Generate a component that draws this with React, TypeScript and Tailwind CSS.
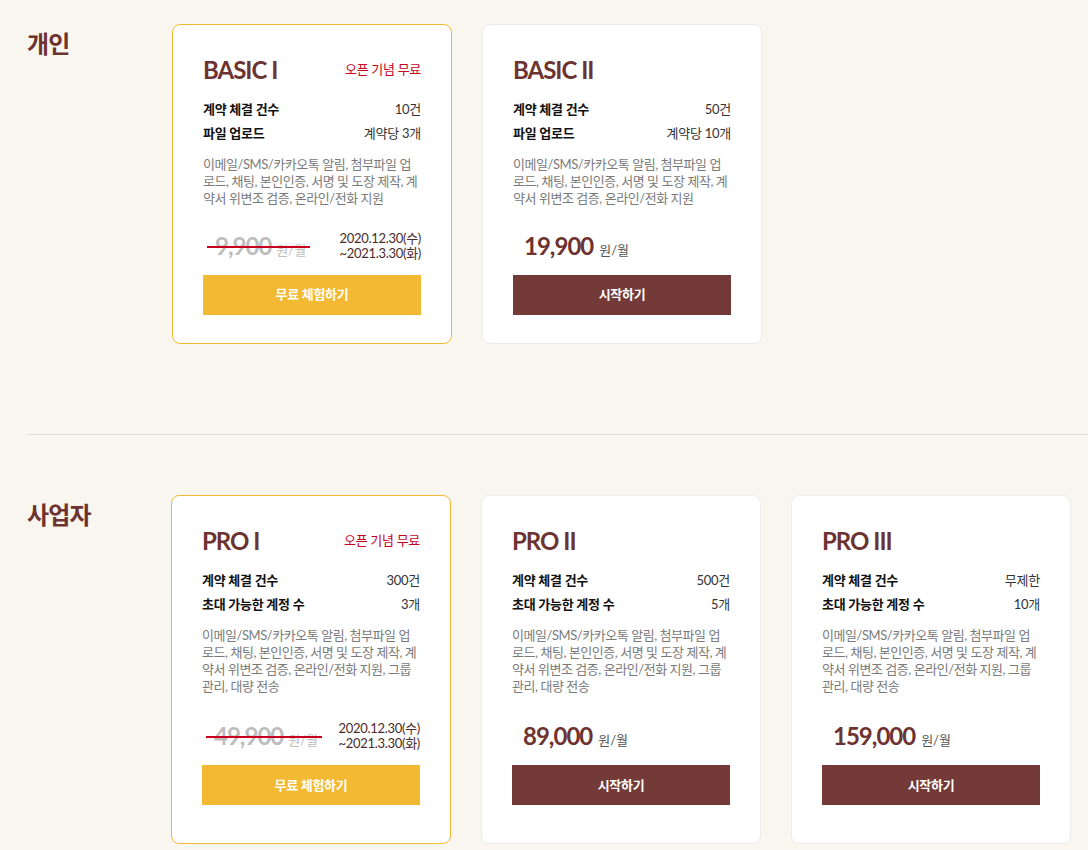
import clsx from "clsx";

type Plan = {
  name: string;
  rows: [string, string][];
  desc: string[];
  price: string;
  promo?: boolean;
};

const descPersonal = [
  "이메일/SMS/카카오톡 알림, 첨부파일 업",
  "로드, 채팅, 본인인증, 서명 및 도장 제작, 계",
  "약서 위변조 검증, 온라인/전화 지원",
];

const descBusiness = [
  "이메일/SMS/카카오톡 알림, 첨부파일 업",
  "로드, 채팅, 본인인증, 서명 및 도장 제작, 계",
  "약서 위변조 검증, 온라인/전화 지원, 그룹",
  "관리, 대량 전송",
];

const personal: Plan[] = [
  {
    name: "BASIC I",
    promo: true,
    rows: [
      ["계약 체결 건수", "10건"],
      ["파일 업로드", "계약당 3개"],
    ],
    desc: descPersonal,
    price: "9,900",
  },
  {
    name: "BASIC II",
    rows: [
      ["계약 체결 건수", "50건"],
      ["파일 업로드", "계약당 10개"],
    ],
    desc: descPersonal,
    price: "19,900",
  },
];

const business: Plan[] = [
  {
    name: "PRO I",
    promo: true,
    rows: [
      ["계약 체결 건수", "300건"],
      ["초대 가능한 계정 수", "3개"],
    ],
    desc: descBusiness,
    price: "49,900",
  },
  {
    name: "PRO II",
    rows: [
      ["계약 체결 건수", "500건"],
      ["초대 가능한 계정 수", "5개"],
    ],
    desc: descBusiness,
    price: "89,000",
  },
  {
    name: "PRO III",
    rows: [
      ["계약 체결 건수", "무제한"],
      ["초대 가능한 계정 수", "10개"],
    ],
    desc: descBusiness,
    price: "159,000",
  },
];

function PlanCard({ plan, tall }: { plan: Plan; tall?: boolean }) {
  return (
    <div
      className={clsx(
        "w-[280px] rounded-[8px] border bg-white px-[30px] pt-[30px]",
        plan.promo ? "border-[#f4b933]" : "border-[#ececec]",
        tall ? "pb-[38px]" : "pb-[28px]"
      )}
    >
      <div className="flex items-center justify-between">
        <h3 className="text-[24px] font-bold leading-[30px] tracking-[-1px] text-[#6d3330]">{plan.name}</h3>
        {plan.promo && <span className="text-[13px] tracking-[-0.3px] text-[#c8001f]">오픈 기념 무료</span>}
      </div>

      <div className="mt-[12px]">
        {plan.rows.map(([label, value]) => (
          <div key={label} className="flex justify-between text-[13px] leading-[24px] tracking-[-0.25px]">
            <span className="font-bold text-[#111]">{label}</span>
            <span className="text-[#333]">{value}</span>
          </div>
        ))}
      </div>

      <p className="mt-[11px] text-[13px] leading-[17.2px] tracking-[-0.45px] text-[#7a7a7a]">
        {plan.desc.map((line) => (
          <span key={line} className="block whitespace-nowrap">
            {line}
          </span>
        ))}
      </p>

      <div className={clsx("flex h-[48px] items-center justify-between", tall ? "mt-[17px]" : "mt-[14px]")}>
        {plan.promo ? (
          <>
            <div className="relative pl-[12px] text-[#bdbdbd]">
              <span className="text-[24px] font-bold tracking-[-1px]">{plan.price}</span>
              <span className="ml-[5px] text-[13px]">원/월</span>
              <span className="absolute left-[4px] right-[-4px] top-1/2 h-[2px] bg-[#c8001f]" />
            </div>
            <div className="text-right text-[13px] leading-[15px] tracking-[-0.3px] text-[#4a2b2b]">
              2020.12.30(수)
              <br />
              ~2021.3.30(화)
            </div>
          </>
        ) : (
          <div className="pl-[11px] text-[#6d3330]">
            <span className="text-[24px] font-bold tracking-[-1px]">{plan.price}</span>
            <span className="ml-[6px] text-[13px] text-[#555]">원/월</span>
          </div>
        )}
      </div>

      <button
        className={clsx(
          "mt-[5px] flex h-[40px] w-full items-center justify-center text-[13px] font-bold tracking-[-0.3px] text-white",
          plan.promo ? "bg-[#f4b933]" : "bg-[#733a37]"
        )}
      >
        {plan.promo ? "무료 체험하기" : "시작하기"}
      </button>
    </div>
  );
}

export default function App() {
  return (
    <div className="min-h-screen bg-[#f9f6ef] pb-[40px] pt-[24px] font-['Lato','Noto_Sans_CJK_KR',sans-serif]">
      <section className="flex pl-[27px]">
        <h2 className="mt-[4px] w-[145px] shrink-0 text-[24px] font-bold leading-[32px] tracking-[-0.8px] text-[#6d3330]">개인</h2>
        <div className="flex gap-[30px]">
          {personal.map((plan) => (
            <PlanCard key={plan.name} plan={plan} />
          ))}
        </div>
      </section>

      <div className="ml-[27px] mt-[90px] h-px bg-[#dedbd5]" />

      <section className="mt-[60px] flex pl-[27px]">
        <h2 className="mt-[4px] w-[144px] shrink-0 text-[24px] font-bold leading-[32px] tracking-[-0.8px] text-[#6d3330]">사업자</h2>
        <div className="flex gap-[30px]">
          {business.map((plan) => (
            <PlanCard key={plan.name} plan={plan} tall />
          ))}
        </div>
      </section>
    </div>
  );
}
